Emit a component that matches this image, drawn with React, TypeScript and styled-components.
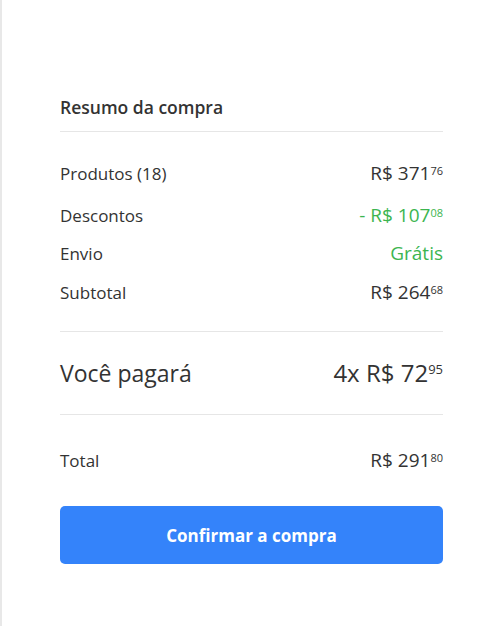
import React from 'react';
import styled, { createGlobalStyle } from 'styled-components';

const GlobalStyle = createGlobalStyle`
  html, body {
    margin: 0;
    padding: 0;
    background: #ffffff;
  }

  body {
    font-family: "Open Sans", "Liberation Sans", Arial, sans-serif;
    color: #333333;
  }
`;

const Page = styled.div`
  min-height: 626px;
  box-sizing: border-box;
  border-left: 2px solid #e8e8e8;
  padding: 96px 57px 0 58px;
`;

const Title = styled.h2`
  margin: 0;
  font-size: 17.5px;
  line-height: 22px;
  font-weight: 600;
  color: #333333;
  padding-bottom: 13px;
`;

const Divider = styled.hr`
  margin: 0;
  border: none;
  height: 1px;
  background: #e6e6e6;
`;

const Section = styled.div<{ $top: number; $bottom: number }>`
  display: flex;
  flex-direction: column;
  padding-top: ${(p) => p.$top}px;
  padding-bottom: ${(p) => p.$bottom}px;
`;

const Row = styled.div<{ $big?: boolean; $space?: number }>`
  display: flex;
  justify-content: space-between;
  align-items: center;
  height: ${(p) => (p.$big ? 28 : 20)}px;
  margin-top: ${(p) => p.$space ?? 0}px;
  color: #333333;
`;

const Label = styled.span<{ $big?: boolean }>`
  font-size: ${(p) => (p.$big ? 23 : 17)}px;
  line-height: 1;
`;

const Value = styled.span<{ $green?: boolean; $big?: boolean }>`
  display: flex;
  align-items: flex-start;
  font-size: ${(p) => (p.$big ? 24 : 19)}px;
  line-height: 1;
  color: ${(p) => (p.$green ? '#3cb550' : '#333333')};
`;

const Cents = styled.span<{ $big?: boolean }>`
  font-size: ${(p) => (p.$big ? 13 : 11)}px;
  line-height: 1;
  margin-left: 0;
  margin-top: ${(p) => (p.$big ? 2 : 1)}px;
`;

const ConfirmButton = styled.button`
  display: block;
  width: 100%;
  height: 58px;
  margin-top: 36px;
  border: none;
  border-radius: 5px;
  background: #3483fa;
  color: #ffffff;
  font-family: "Open Sans", "Liberation Sans", Arial, sans-serif;
  font-size: 17px;
  font-weight: 700;
  cursor: pointer;
`;

interface PriceProps {
  whole: string;
  cents?: string;
  green?: boolean;
  big?: boolean;
}

const Price: React.FC<PriceProps> = ({ whole, cents, green, big }) => (
  <Value $green={green} $big={big}>
    {whole}
    {cents && <Cents $big={big}>{cents}</Cents>}
  </Value>
);

const App: React.FC = () => {
  return (
    <>
      <GlobalStyle />
      <Page>
        <Title>Resumo da compra</Title>
        <Divider />
        <Section $top={31} $bottom={29}>
          <Row>
            <Label>Produtos (18)</Label>
            <Price whole="R$ 371" cents="76" />
          </Row>
          <Row $space={22}>
            <Label>Descontos</Label>
            <Price whole="- R$ 107" cents="08" green />
          </Row>
          <Row $space={18}>
            <Label>Envio</Label>
            <Price whole="Grátis" green />
          </Row>
          <Row $space={19}>
            <Label>Subtotal</Label>
            <Price whole="R$ 264" cents="68" />
          </Row>
        </Section>
        <Divider />
        <Section $top={27} $bottom={27}>
          <Row $big>
            <Label $big>Você pagará</Label>
            <Price whole="4x R$ 72" cents="95" big />
          </Row>
        </Section>
        <Divider />
        <Section $top={35} $bottom={0}>
          <Row>
            <Label>Total</Label>
            <Price whole="R$ 291" cents="80" />
          </Row>
        </Section>
        <ConfirmButton>Confirmar a compra</ConfirmButton>
      </Page>
    </>
  );
};

export default App;
